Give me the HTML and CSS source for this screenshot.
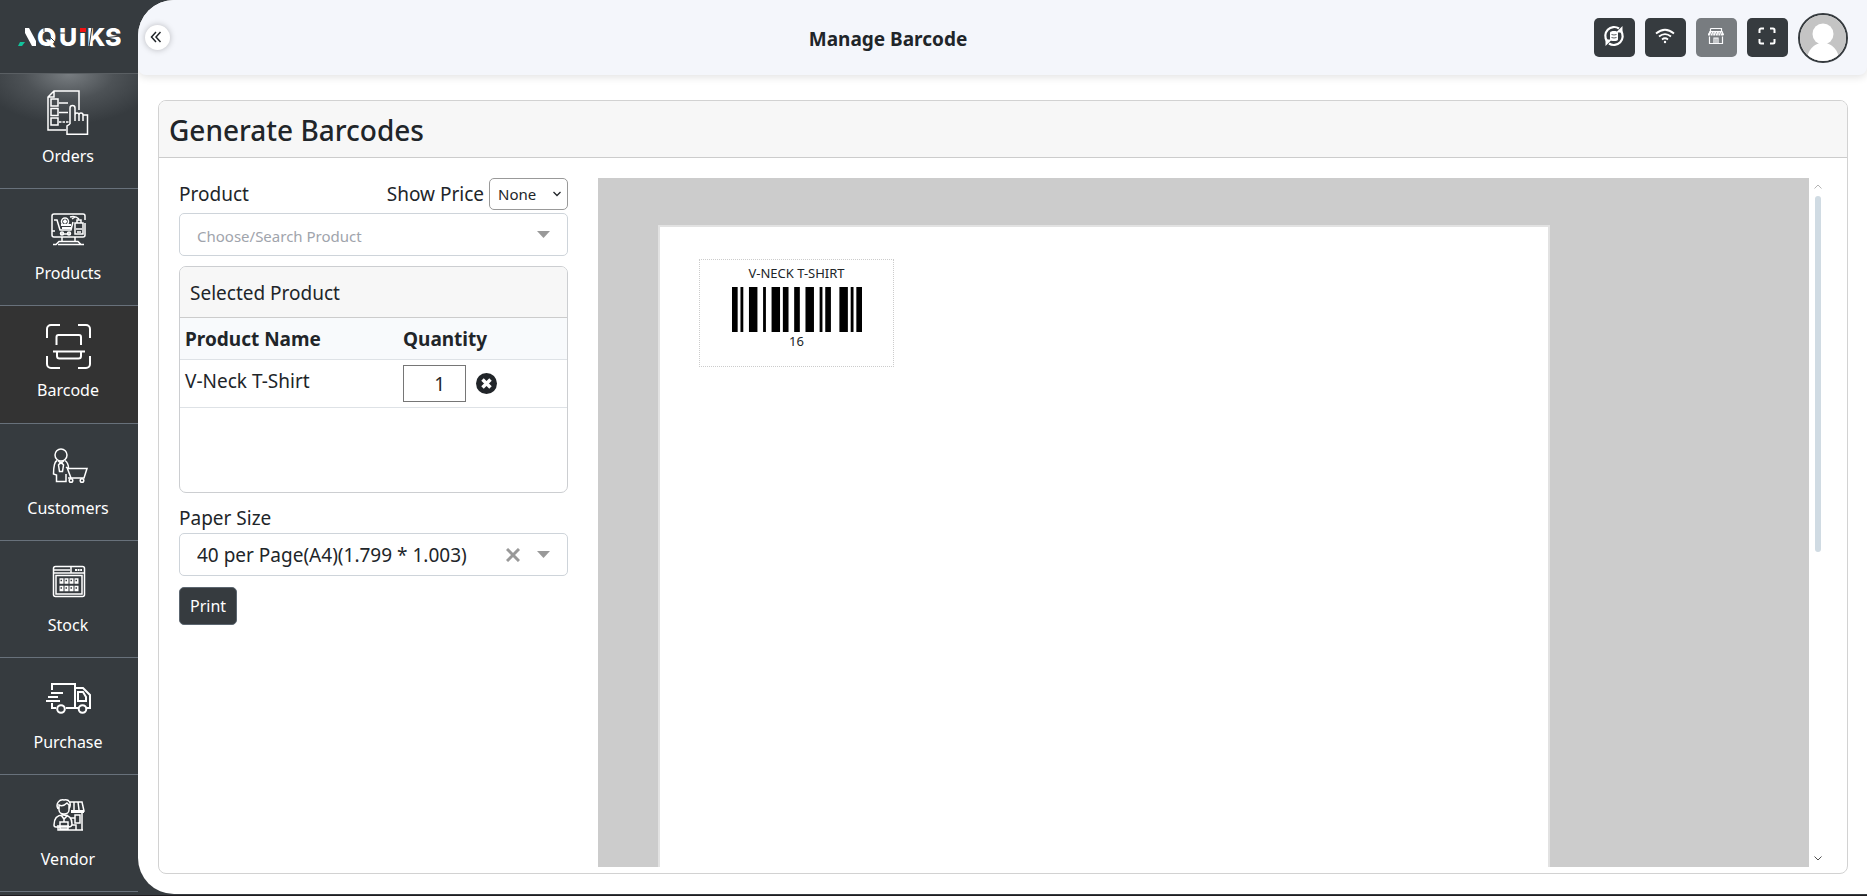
FILE: index.html
```html
<!DOCTYPE html>
<html lang="en">
<head>
<meta charset="utf-8">
<meta name="viewport" content="width=device-width, initial-scale=1">
<title>Manage Barcode</title>
<link rel="stylesheet" href="styles.css">
</head>
<body>
<div class="shell">
  <aside class="sidebar">
    <a class="brand" href="#" aria-label="Aquiks">
      <svg width="104" height="34" viewBox="0 -6 104 34">
        <path d="M3 15H8L5 19H1z" fill="#12c29b"/>
        <path d="M8 1H12L19 14V19H15L8 6z" fill="#fff"/>
        <text class="brand-text" y="19" x="20 42 62 70 88">QUIKS</text>
        <path d="M62 0H70V6H62z" fill="#363b3f"/>
        <path d="M63 1H69V5H63z" fill="#f01414"/>
        <path d="M27 0V5M33 10L40 17M42 6H48M75 0L72 20M87 11L103 9" stroke="#363b3f" stroke-width="1" fill="none"/>
      </svg>
    </a>
    <nav class="nav">
      <a class="nav-item nav-first" href="#">
        <svg class="nav-icon" viewBox="0 0 45 45"><path d="M20 40H2V7L8 1H33V20M8 1V7H2M5 9h7v7H5zM5 18.500h7v7H5zM5 28h7v7H5zM13 13h9M13 22.500h9"/><path d="M13 32h10" stroke-dasharray="2.500 1"/><path d="M24 34V18a2.500 2.500 0 0 1 5 0V31M29 25a2 2 0 0 1 4 0V31M33 25a2 2 0 0 1 4 0V31M37 25h4.500V44.200H21V36l3-2"/></svg>
        <span>Orders</span>
      </a>
      <a class="nav-item" href="#">
        <svg class="nav-icon" viewBox="0 0 45 45"><path d="M39 13V9a2 2 0 0 0-2-2H8a2 2 0 0 0-2 2V28a2 2 0 0 0 2 2H37a2 2 0 0 0 2-2V16M6 24h3M16 30v4M29 30v4M7 37.500h3l3-3H32l3 3h3M12 37.500H35M8 13h3l3 10H25l2-8"/><circle cx="19" cy="14.500" r="3.500"/><path d="M15 18H25M16 21H25M19 12.500v4M17 14.500h4" stroke-width="2"/><path d="M15 27h10M29 16h8V27H29zM31 16v-3h4v3M24 10a8 6 0 0 1 9 2M26 12l3-2M30 22h6M31 25h4"/><circle cx="16" cy="26.500" r="1.500"/><circle cx="23" cy="26.500" r="1.500"/></svg>
        <span>Products</span>
      </a>
      <a class="nav-item nav-active" href="#" aria-current="page">
        <svg class="nav-icon" viewBox="0 0 45 45"><path stroke-width="2" d="M1 14V5a4 4 0 0 1 4-4h9M32 1h8a4 4 0 0 1 4 4v9M44 32v8a4 4 0 0 1-4 4h-8M14 44H5a4 4 0 0 1-4-4v-8M10.500 21V13a2 2 0 0 1 2-2H33a2 2 0 0 1 2 2v8M7 27.500H39M11 28v4a2.500 2.500 0 0 0 2.500 2.500H32.500A2.500 2.500 0 0 0 35 32v-4"/></svg>
        <span>Barcode</span>
      </a>
      <a class="nav-item" href="#">
        <svg class="nav-icon" viewBox="0 0 45 45"><circle cx="15" cy="13" r="6"/><path d="M11 18.500C8 20 7.500 25 7.500 32L10.500 33V39.500H20V32M19 18.500c3 2 3.500 6 3.500 8M15 20l-2.500 3 1 6.500h3l1-6.500zM12 18.500l3 3 3-3M20 25l2 1.500h19L38 36H25L21 25.500M25 36h-3"/><circle cx="25" cy="38.500" r="1.800"/><circle cx="36" cy="38.500" r="1.800"/></svg>
        <span>Customers</span>
      </a>
      <a class="nav-item" href="#">
        <svg class="nav-icon" viewBox="0 0 45 45"><rect x="7.500" y="7.500" width="31" height="30" rx="2"/><path d="M7 14H39M25 8v6M10 16.500H36V35H10zM8 11H24"/><path d="M29 11h7" stroke-width="2" stroke-dasharray="2 .6"/><path d="M13.500 22h19M13.500 29.500h19" stroke-width="5.500" stroke-dasharray="4 1"/><path d="M14.500 21.500h18M14.500 29h18" stroke="#363b3f" stroke-width="1.500" stroke-dasharray="1.500 3.500"/></svg>
        <span>Stock</span>
      </a>
      <a class="nav-item" href="#">
        <svg class="nav-icon" viewBox="0 0 45 45"><g stroke-width="2"><path d="M6 14V8H29V32H20M6 27v5h4M29 12h8l7 7V32h-4M32 32H20M0 25H14M2 21H12M5 17h12M32 16h5l3 5v4H32z"/><circle cx="15" cy="33" r="3.800"/><circle cx="36.500" cy="33" r="3.800"/></g></svg>
        <span>Purchase</span>
      </a>
      <a class="nav-item" href="#">
        <svg class="nav-icon" viewBox="0 0 45 45"><path d="M12 16c-3-6 2-10 6-9 5-1 8 3 5 9M13 12q4 2 8-2l2 2v5a5 4 0 0 1-10 0zM24 9H36l2 9H25M28 9v8M32 9l1 8M36 18V37M8 32c0-7 3-10 9-10s9 3 9 9c0 3-2 3-4 3H10q-2 0-2-2zM12 32v5H37M15 22l3 4 4-4M18 26v3M13 33h10M29 22h5v8h-5zM24 25h5M26 32h4v5M14 29h8v7h-8z"/><path d="M25 18.500h13" stroke-width="3"/></svg>
        <span>Vendor</span>
      </a>
    </nav>
  </aside>

  <main class="main">
    <header class="topbar">
      <div class="toggle-slot">
        <button class="toggle" type="button" aria-label="Collapse menu">
          <svg width="12" height="12" viewBox="0 0 12 12"><path d="M6 1L1.500 6 6 11M10.500 1L6 6l4.500 5"/></svg>
        </button>
      </div>
      <h1 class="page-title">Manage Barcode</h1>
      <div class="tools">
        <button class="tool" type="button" aria-label="Sync">
          <svg width="22" height="22" viewBox="0 0 22 22"><path d="M4 16A8.800 8.800 0 0 1 16 3.500M18 6A8.800 8.800 0 0 1 6 18.500" stroke-width="2.200"/><path d="M19.500 1v6.500H13zM2.500 21v-6.500H9z" fill="#fff" stroke="none"/><path d="M7 7.500C7 5.500 15 5.500 15 7.500V14.500C15 16.500 7 16.500 7 14.500z" fill="#fff" stroke="none"/><path d="M8.500 9.500q2.500 1 5 0M8.500 12.500q2.500 1 5 0" stroke="#363b3f" stroke-width=".8"/></svg>
        </button>
        <button class="tool" type="button" aria-label="Network">
          <svg width="20" height="16" viewBox="0 0 20 16"><path d="M1 5.500Q10-2 19 5.500M4 8.500q6-4.800 12 0M7 11.500q3-2.400 6 0" stroke-width="1.800"/><circle cx="10" cy="14" r="1.200" fill="#fff" stroke="none"/></svg>
        </button>
        <button class="tool" type="button" aria-label="Store" disabled>
          <svg width="18" height="18" viewBox="0 0 18 18"><path d="M3.500 1.500h11V4M3.500 1.500V4M3 4.500h12M1.500 8L3 4.500M15 4.500L16.500 8M2.500 9.500V16.500h13V9.500M7 16.500V11h4v5.500M9 11v5" stroke-width="1.200"/><path d="M2 5.500h14M1 7.500h16" stroke-width="2" stroke-dasharray="2 .6"/></svg>
        </button>
        <button class="tool" type="button" aria-label="Full screen">
          <svg width="18" height="18" viewBox="0 0 18 18"><path d="M1.500 6V3a1.500 1.500 0 0 1 1.500-1.500h3M12 1.500h3A1.500 1.500 0 0 1 16.500 3v3M16.500 12v3a1.500 1.500 0 0 1-1.500 1.500h-3M6 16.500H3A1.500 1.500 0 0 1 1.500 15v-3" stroke-width="2"/></svg>
        </button>
        <button class="avatar" type="button" aria-label="Account">
          <svg viewBox="0 0 46 46"><rect width="46" height="46" fill="#c4c4c4"/><circle cx="23" cy="19" r="10.500" fill="#fff"/><path d="M7 46c0-11 7-18 16-18s16 7 16 18z" fill="#fff"/></svg>
        </button>
      </div>
    </header>

    <section class="card">
      <h2 class="card-title">Generate Barcodes</h2>
      <div class="card-body">
        <form class="form">
          <div class="form-row">
            <label for="product">Product</label>
            <div class="price">
              <label for="price">Show Price</label>
              <div class="price-box">
                <select id="price"><option>None</option><option>Price</option></select>
                <svg width="8" height="6" viewBox="0 0 8 6"><path d="M.5 1L4 4.500 7.500 1"/></svg>
              </div>
            </div>
          </div>
          <div class="combo">
            <input id="product" class="combo-input" type="text" placeholder="Choose/Search Product">
            <svg class="caret" viewBox="0 0 13 7"><path d="M0 0H13L6.500 7z"/></svg>
          </div>
          <div class="picked">
            <div class="picked-title">Selected Product</div>
            <table class="picked-table">
              <thead><tr><th class="name-col">Product Name</th><th>Quantity</th></tr></thead>
              <tbody>
                <tr>
                  <td class="name-cell">V-Neck T-Shirt</td>
                  <td>
                    <div class="qty">
                      <input class="qty-input" type="number" value="1" aria-label="Quantity">
                      <button class="remove" type="button" aria-label="Remove">
                        <svg width="21" height="21" viewBox="0 0 21 21"><circle cx="10.500" cy="10.500" r="10.500" fill="#212529"/><path d="M6.500 6.500l8 8M14.500 6.500l-8 8" stroke="#fff" stroke-width="3.500"/></svg>
                      </button>
                    </div>
                  </td>
                </tr>
              </tbody>
            </table>
          </div>
          <label class="paper-label" for="paper-size">Paper Size</label>
          <div class="combo">
            <input id="paper-size" class="combo-input" type="text" value="40 per Page(A4)(1.799 * 1.003)">
            <button class="clear" type="button" aria-label="Clear"><svg width="14" height="14" viewBox="0 0 14 14"><path d="M1 1l12 12M13 1L1 13"/></svg></button>
            <svg class="caret" viewBox="0 0 13 7"><path d="M0 0H13L6.500 7z"/></svg>
          </div>
          <button class="print" type="button">Print</button>
        </form>

        <div class="preview">
          <div class="paper">
            <div class="sticker">
              <div>V-NECK T-SHIRT</div>
              <svg class="bars" viewBox="0 0 46 16" preserveAspectRatio="none"><path d="M0 0h2v16H0zM3 0h1v16H3zM6 0h3v16H6zM11 0h1v16h-1zM14 0h3v16h-3zM18 0h2v16h-2zM22 0h2v16h-2zM26 0h3v16h-3zM31 0h1v16h-1zM33 0h2v16h-2zM38 0h3v16h-3zM42 0h1v16h-1zM44 0h2v16h-2z"/></svg>
              <div>16</div>
            </div>
          </div>
        </div>
        <div class="scroll" aria-hidden="true">
          <svg width="8" height="6" viewBox="0 0 8 6"><path d="M.5 5.500L4 2l3.500 3.500" stroke="#b4b4b4"/></svg>
          <div class="track"><div class="thumb"></div></div>
          <svg width="8" height="6" viewBox="0 0 8 6"><path d="M.5 .5L4 4 7.500 .5" stroke="#505050"/></svg>
        </div>
      </div>
    </section>
  </main>
</div>
</body>
</html>
```
FILE: styles.css
```css
* { box-sizing: border-box; }
body {
  margin: 0;
  background: #1f1c20;
  color: #212529;
  font: 19px/24px "Noto Sans", "Open Sans", sans-serif;
}
button, input, select { font: inherit; color: inherit; margin: 0; }
button { padding: 0; border: 0; cursor: pointer; }
svg { display: block; flex: none; fill: none; }

.shell {
  display: flex;
  height: calc(100vh - 1px);
  padding-bottom: 1px;
  overflow: hidden;
  background: #363b3f;
}

/* Sidebar */
.sidebar { flex: none; width: 138px; }
.brand {
  display: flex;
  justify-content: center;
  align-items: center;
  height: 74px;
  padding-top: 2px;
  border-bottom: 1px solid #5a5f63;
}
.brand-text { font: 800 25px "Inter", sans-serif; fill: #fff; }
.nav-item {
  display: flex;
  flex-direction: column;
  align-items: center;
  gap: 9px;
  min-height: 117px;
  padding: 18px 2px 0 0;
  border-bottom: 1px solid #68717b;
  color: #fff;
  font-size: 16px;
  text-decoration: none;
}
.nav-first {
  min-height: 115px;
  padding-top: 16px;
  background: radial-gradient(ellipse 90px 50px at 50% 0, #787d81, #4d5256 50%, #363b3f);
}
.nav-active { min-height: 118px; background: #333; }
.nav-icon { width: 45px; height: 45px; stroke: #fff; stroke-width: 1.5; }

/* Main area */
.main {
  flex: 1;
  min-width: 0;
  display: flex;
  flex-direction: column;
  border-radius: 36px 0 0 36px;
  background: #fff;
  overflow: hidden;
}
.topbar {
  flex: none;
  display: flex;
  align-items: center;
  justify-content: space-between;
  height: 75px;
  padding: 0 19px 0 7px;
  border-radius: 0 0 8px 8px;
  background: #f4f6fb;
  box-shadow: 0 2px 8px rgba(0, 0, 0, .12);
}
.toggle-slot { width: 37px; }
.toggle {
  display: flex;
  align-items: center;
  justify-content: center;
  width: 25px;
  height: 25px;
  padding: 0 3px 1px 0;
  border-radius: 50%;
  background: #fff;
  box-shadow: 0 0 6px rgba(0, 0, 0, .25);
}
.toggle svg { stroke: #212529; stroke-width: 1.5; }
.page-title { margin: 0; padding-top: 2px; font-size: 19px; font-weight: 700; }
.tools { display: flex; align-items: center; gap: 10px; }
.tool {
  display: flex;
  align-items: center;
  justify-content: center;
  width: 41px;
  height: 39px;
  padding-bottom: 4px;
  border-radius: 5px;
  background: #363b3f;
}
.tool svg { stroke: #fff; }
.tool:disabled { opacity: .65; }
.avatar {
  width: 50px;
  height: 50px;
  border: 2px solid #363b3f;
  border-radius: 50%;
  overflow: hidden;
}

/* Card */
.card {
  flex: 1;
  min-height: 0;
  display: flex;
  flex-direction: column;
  margin: 25px 19px 20px 20px;
  border: 1px solid #d2d2d2;
  border-radius: 8px;
  overflow: hidden;
}
.card-title {
  flex: none;
  margin: 0;
  padding: 11px 10px 9px;
  border-bottom: 1px solid #ccc;
  background: #f7f7f7;
  font-size: 28px;
  font-weight: 500;
  line-height: 36px;
}
.card-body {
  flex: 1;
  min-height: 0;
  display: flex;
  padding: 20px 20px 6px;
}

/* Form */
.form { flex: none; width: 389px; margin-right: 30px; }
.form-row, .price { display: flex; align-items: center; }
.form-row { justify-content: space-between; margin-bottom: 3px; }
.price { gap: 5px; }
.price-box { display: grid; align-items: center; }
.price-box select {
  grid-area: 1 / 1;
  width: 79px;
  height: 32px;
  padding: 0 8px;
  border: 1px solid #999;
  border-radius: 5px;
  background: #fff;
  appearance: none;
  font-size: 15px;
}
.price-box svg {
  grid-area: 1 / 1;
  justify-self: end;
  margin-right: 7px;
  stroke: #212529;
  stroke-width: 1.3;
  pointer-events: none;
}
.combo {
  display: flex;
  align-items: center;
  gap: 17px;
  height: 43px;
  padding: 0 17px;
  border: 1px solid #ced4da;
  border-radius: 5px;
}
.combo-input {
  flex: 1;
  min-width: 0;
  padding: 0;
  border: 0;
  outline: 0;
  background: none;
}
.combo-input::placeholder { color: #a0a4ac; font-size: 15px; opacity: 1; }
.caret { width: 13px; height: 7px; fill: #999; }
.clear { background: none; }
.clear svg { stroke: #999; stroke-width: 3; }
.picked {
  height: 227px;
  margin: 10px 0 13px;
  border: 1px solid #ccced1;
  border-radius: 7px;
  overflow: hidden;
}
.picked-title {
  padding: 14px 10px 12px;
  border-bottom: 1px solid #ccc;
  background: #f7f7f7;
}
.picked-table { width: 100%; border-collapse: collapse; table-layout: fixed; }
.picked-table th {
  height: 41px;
  padding: 1px 5px 0;
  background: #f8fafc;
  font-weight: 700;
  text-align: left;
}
.name-col { width: 218px; }
.picked-table td { height: 48px; padding: 5px; vertical-align: top; }
.picked-table .name-cell { padding-top: 9px; }
.picked-table tr { border-bottom: 1px solid #dee2e6; }
.qty { display: flex; align-items: center; gap: 10px; }
.qty-input {
  width: 63px;
  height: 37px;
  padding: 2px 20px 0 2px;
  border: 1px solid #767676;
  text-align: right;
  appearance: textfield;
}
.qty-input::-webkit-inner-spin-button { display: none; }
.remove { background: none; }
.paper-label { display: block; margin-bottom: 3px; }
.print {
  display: block;
  height: 38px;
  margin-top: 11px;
  padding: 0 10px;
  border: 1px solid #5c6670;
  border-radius: 5px;
  background: #363b3f;
  color: #fff;
  font-size: 16px;
}

/* Print preview */
.preview {
  flex: 1;
  min-width: 0;
  padding: 47px 60px 0;
  background: #ccc;
  overflow: hidden;
}
.paper {
  width: 892px;
  height: 1123px;
  padding: 32px 39px;
  border: 2px solid #e2e2e2;
  background: #fff;
}
.sticker {
  width: 195px;
  height: 108px;
  padding-top: 4px;
  border: 1px dotted #ccc;
  font-size: 13px;
  line-height: 18px;
  text-align: center;
}
.bars { width: 130px; height: 45px; margin: 5px auto 0; fill: #000; }
.scroll {
  flex: none;
  display: flex;
  flex-direction: column;
  align-items: center;
  gap: 12px;
  width: 18px;
  padding: 5px 0;
}
.track { flex: 1; margin-top: -5px; }
.thumb { width: 6px; height: 55%; border-radius: 3px; background: #d0dbe3; }
```
